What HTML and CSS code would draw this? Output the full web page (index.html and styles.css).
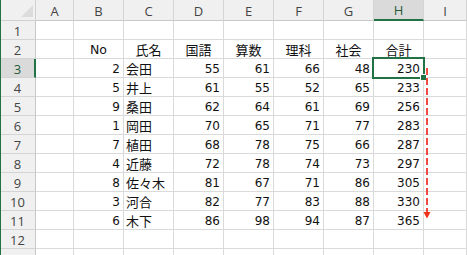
FILE: index.html
```html
<!DOCTYPE html>
<html lang="ja">
<head>
<meta charset="utf-8">
<link rel="stylesheet" href="styles.css">
</head>
<body>
<div class="sheet">
  <div class="grid">
    <div class="corner"><span class="tri"></span></div>
    <div class="hd">A</div><div class="hd">B</div><div class="hd">C</div><div class="hd">D</div><div class="hd">E</div><div class="hd">F</div><div class="hd">G</div><div class="hd sel-col">H</div><div class="hd">I</div>

    <div class="rh">1</div><div class="c"></div><div class="c"></div><div class="c"></div><div class="c"></div><div class="c"></div><div class="c"></div><div class="c"></div><div class="c"></div><div class="c"></div>

    <div class="rh">2</div><div class="c"></div><div class="c ctr lat">No</div><div class="c ctr jp">氏名</div><div class="c ctr jp">国語</div><div class="c ctr jp">算数</div><div class="c ctr jp">理科</div><div class="c ctr jp">社会</div><div class="c ctr jp">合計</div><div class="c"></div>

    <div class="rh sel-row">3</div><div class="c"></div><div class="c n">2</div><div class="c t jp">会田</div><div class="c n">55</div><div class="c n">61</div><div class="c n">66</div><div class="c n">48</div><div class="c n">230</div><div class="c"></div>
    <div class="rh">4</div><div class="c"></div><div class="c n">5</div><div class="c t jp">井上</div><div class="c n">61</div><div class="c n">55</div><div class="c n">52</div><div class="c n">65</div><div class="c n">233</div><div class="c"></div>
    <div class="rh">5</div><div class="c"></div><div class="c n">9</div><div class="c t jp">桑田</div><div class="c n">62</div><div class="c n">64</div><div class="c n">61</div><div class="c n">69</div><div class="c n">256</div><div class="c"></div>
    <div class="rh">6</div><div class="c"></div><div class="c n">1</div><div class="c t jp">岡田</div><div class="c n">70</div><div class="c n">65</div><div class="c n">71</div><div class="c n">77</div><div class="c n">283</div><div class="c"></div>
    <div class="rh">7</div><div class="c"></div><div class="c n">7</div><div class="c t jp">植田</div><div class="c n">68</div><div class="c n">78</div><div class="c n">75</div><div class="c n">66</div><div class="c n">287</div><div class="c"></div>
    <div class="rh">8</div><div class="c"></div><div class="c n">4</div><div class="c t jp">近藤</div><div class="c n">72</div><div class="c n">78</div><div class="c n">74</div><div class="c n">73</div><div class="c n">297</div><div class="c"></div>
    <div class="rh">9</div><div class="c"></div><div class="c n">8</div><div class="c t jp">佐々木</div><div class="c n">81</div><div class="c n">67</div><div class="c n">71</div><div class="c n">86</div><div class="c n">305</div><div class="c"></div>
    <div class="rh">10</div><div class="c"></div><div class="c n">3</div><div class="c t jp">河合</div><div class="c n">82</div><div class="c n">77</div><div class="c n">83</div><div class="c n">88</div><div class="c n">330</div><div class="c"></div>
    <div class="rh">11</div><div class="c"></div><div class="c n">6</div><div class="c t jp">木下</div><div class="c n">86</div><div class="c n">98</div><div class="c n">94</div><div class="c n">87</div><div class="c n">365</div><div class="c"></div>

    <div class="rh">12</div><div class="c"></div><div class="c"></div><div class="c"></div><div class="c"></div><div class="c"></div><div class="c"></div><div class="c"></div><div class="c"></div><div class="c"></div>
    <div class="rh"></div><div class="c"></div><div class="c"></div><div class="c"></div><div class="c"></div><div class="c"></div><div class="c"></div><div class="c"></div><div class="c"></div><div class="c"></div>
  </div>

  <div class="selbox"></div>
  <div class="handle"></div>
  <svg class="arrow" width="10" height="156" viewBox="0 0 10 156">
    <line x1="5" y1="2" x2="5" y2="146" stroke="#f01e14" stroke-width="1.6" stroke-dasharray="7 3"/>
    <polygon points="1.5,146 8.5,146 5,152.5" fill="#f0301a"/>
  </svg>
  <div class="winedge"></div>
</div>
</body>
</html>
```

FILE: styles.css
```css
* { box-sizing: border-box; }
html, body {
  margin: 0;
  padding: 0;
  background: #ffffff;
}
.sheet {
  position: relative;
  width: 467px;
  height: 255px;
  overflow: hidden;
}
.grid {
  display: grid;
  grid-template-columns: 36px 38px repeat(7, 50px) 1fr;
  grid-template-rows: 21px repeat(13, 19px);
}
.grid > div {
  border-right: 1px solid #dadada;
  border-bottom: 1px solid #dadada;
  display: flex;
  align-items: center;
  overflow: hidden;
  white-space: nowrap;
}
.corner {
  background: #f0f0f0;
  position: relative;
  border-right-color: #d0d0d0 !important;
  border-bottom-color: #d0d0d0 !important;
}
.tri {
  position: absolute;
  left: 21px;
  top: 5px;
  width: 0;
  height: 0;
  border-left: 12px solid transparent;
  border-bottom: 12px solid #dcdcdc;
}
.hd {
  background: #f0f0f0;
  justify-content: center;
  font-family: "Open Sans", "Noto Sans", sans-serif;
  font-size: 13px;
  color: #444444;
  padding-top: 2px;
  border-right-color: #d4d4d4 !important;
  border-bottom-color: #c8c8c8 !important;
}
.hd.sel-col {
  background: #dadada;
  color: #1f5a39;
  border-bottom: 2px solid #217346 !important;
  padding-top: 1px;
}
.rh {
  background: #f0f0f0;
  justify-content: center;
  font-family: "Open Sans", "Noto Sans", sans-serif;
  font-size: 13px;
  color: #444444;
  padding-top: 1px;
  border-right-color: #c8c8c8 !important;
  border-bottom-color: #d4d4d4 !important;
}
.rh.sel-row {
  background: #dadada;
  color: #1f5a39;
  border-right: 2px solid #217346 !important;
  padding-left: 1px;
}
.c {
  font-family: "DejaVu Sans", "Noto Sans CJK JP", sans-serif;
  font-size: 12px;
  color: #111111;
  padding: 1px 3px 0 3px;
}
.n { justify-content: flex-end; padding-right: 3px; }
.t { justify-content: flex-start; }
.ctr { justify-content: center; }
.jp {
  font-family: "Noto Sans CJK JP", sans-serif;
  font-size: 13px;
  padding-top: 0;
}
.t.jp { padding-left: 2px; }
.lat { font-size: 12.5px; }

.selbox {
  position: absolute;
  left: 372px;
  top: 57px;
  width: 53px;
  height: 22px;
  border: 2px solid #217346;
}
.handle {
  position: absolute;
  left: 420px;
  top: 74px;
  width: 7px;
  height: 7px;
  background: #217346;
  border: 1px solid #ffffff;
}
.arrow {
  position: absolute;
  left: 422px;
  top: 66px;
}
.winedge {
  position: absolute;
  left: 0;
  top: 0;
  width: 1px;
  height: 255px;
  background: #217346;
}
```
